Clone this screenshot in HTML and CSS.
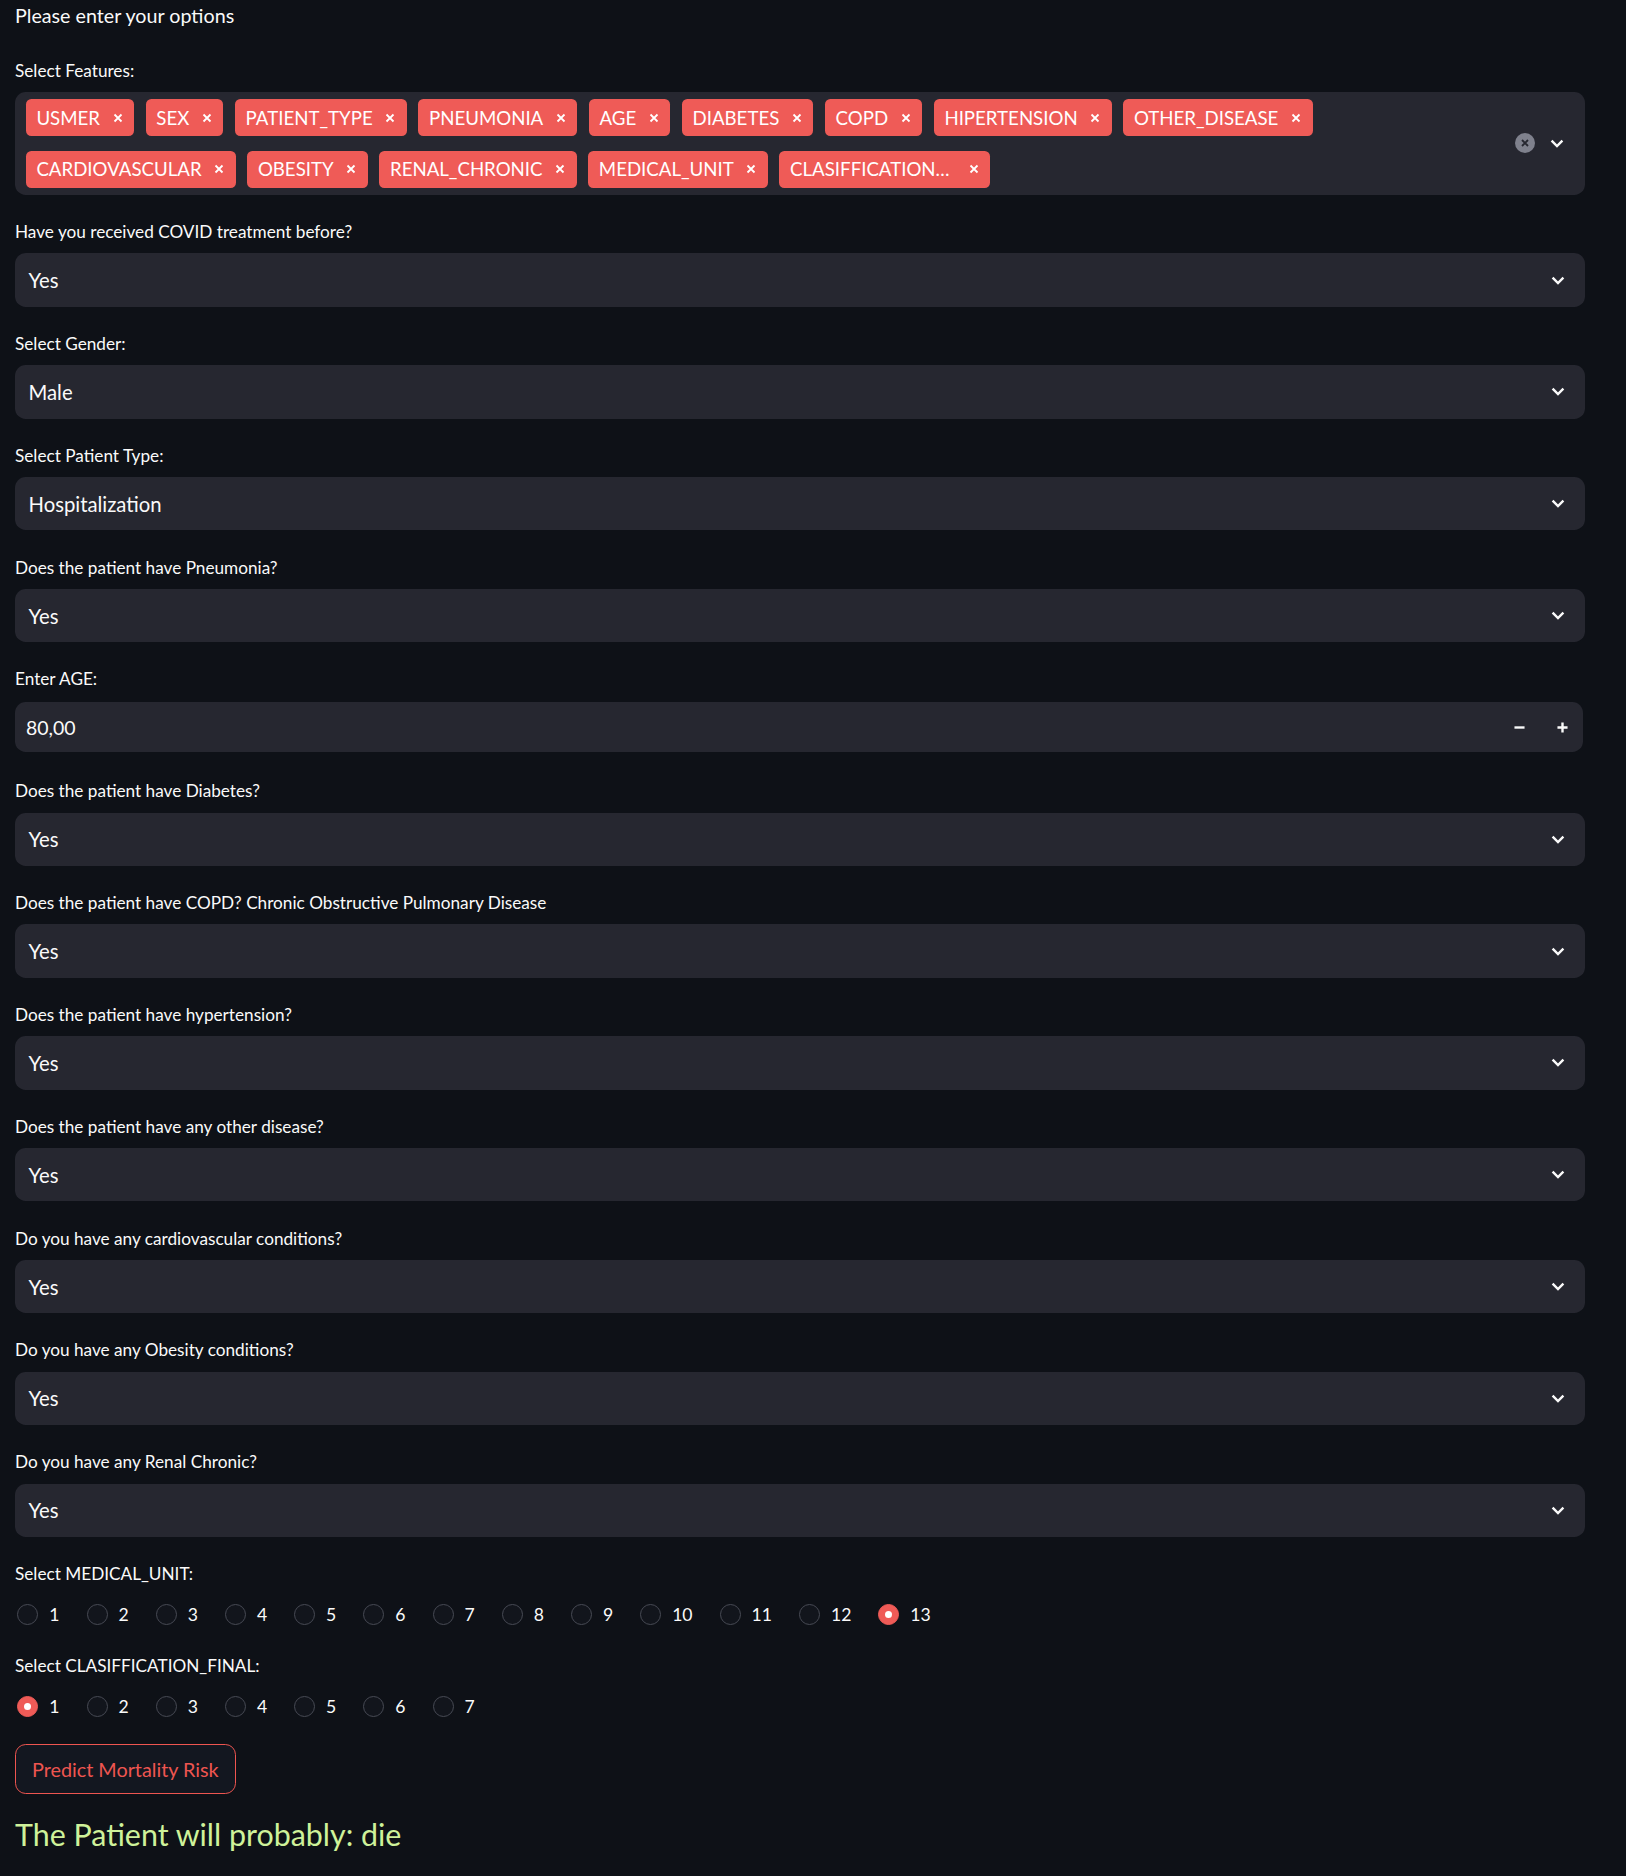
FILE: index.html
```html
<!DOCTYPE html>
<html lang="en">
<head>
<meta charset="utf-8">
<title>Please enter your options</title>
<link rel="stylesheet" href="styles.css">
</head>
<body>
<main class="page">
  <p class="intro">Please enter your options</p>

  <div class="field">
    <div class="wlabel">Select Features:</div>
    <div class="multi">
      <div class="tags">
        <span class="tag"><span class="tag-text">USMER</span><svg class="tag-x" viewBox="0 0 10 10"><path d="M1.5 1.5L8.5 8.5M8.5 1.5L1.5 8.5"/></svg></span>
        <span class="tag"><span class="tag-text">SEX</span><svg class="tag-x" viewBox="0 0 10 10"><path d="M1.5 1.5L8.5 8.5M8.5 1.5L1.5 8.5"/></svg></span>
        <span class="tag"><span class="tag-text">PATIENT_TYPE</span><svg class="tag-x" viewBox="0 0 10 10"><path d="M1.5 1.5L8.5 8.5M8.5 1.5L1.5 8.5"/></svg></span>
        <span class="tag"><span class="tag-text">PNEUMONIA</span><svg class="tag-x" viewBox="0 0 10 10"><path d="M1.5 1.5L8.5 8.5M8.5 1.5L1.5 8.5"/></svg></span>
        <span class="tag"><span class="tag-text">AGE</span><svg class="tag-x" viewBox="0 0 10 10"><path d="M1.5 1.5L8.5 8.5M8.5 1.5L1.5 8.5"/></svg></span>
        <span class="tag"><span class="tag-text">DIABETES</span><svg class="tag-x" viewBox="0 0 10 10"><path d="M1.5 1.5L8.5 8.5M8.5 1.5L1.5 8.5"/></svg></span>
        <span class="tag"><span class="tag-text">COPD</span><svg class="tag-x" viewBox="0 0 10 10"><path d="M1.5 1.5L8.5 8.5M8.5 1.5L1.5 8.5"/></svg></span>
        <span class="tag"><span class="tag-text">HIPERTENSION</span><svg class="tag-x" viewBox="0 0 10 10"><path d="M1.5 1.5L8.5 8.5M8.5 1.5L1.5 8.5"/></svg></span>
        <span class="tag"><span class="tag-text">OTHER_DISEASE</span><svg class="tag-x" viewBox="0 0 10 10"><path d="M1.5 1.5L8.5 8.5M8.5 1.5L1.5 8.5"/></svg></span>
        <span class="tag-break"></span>
        <span class="tag"><span class="tag-text">CARDIOVASCULAR</span><svg class="tag-x" viewBox="0 0 10 10"><path d="M1.5 1.5L8.5 8.5M8.5 1.5L1.5 8.5"/></svg></span>
        <span class="tag"><span class="tag-text">OBESITY</span><svg class="tag-x" viewBox="0 0 10 10"><path d="M1.5 1.5L8.5 8.5M8.5 1.5L1.5 8.5"/></svg></span>
        <span class="tag"><span class="tag-text">RENAL_CHRONIC</span><svg class="tag-x" viewBox="0 0 10 10"><path d="M1.5 1.5L8.5 8.5M8.5 1.5L1.5 8.5"/></svg></span>
        <span class="tag"><span class="tag-text">MEDICAL_UNIT</span><svg class="tag-x" viewBox="0 0 10 10"><path d="M1.5 1.5L8.5 8.5M8.5 1.5L1.5 8.5"/></svg></span>
        <span class="tag"><span class="tag-text trunc">CLASIFFICATION_FINAL</span><svg class="tag-x" viewBox="0 0 10 10"><path d="M1.5 1.5L8.5 8.5M8.5 1.5L1.5 8.5"/></svg></span>
      </div>
      <div class="multi-icons">
        <svg class="clear" viewBox="0 0 20 20"><circle cx="10" cy="10" r="10"/><path d="M7 7L13 13M13 7L7 13"/></svg>
        <svg class="chev" viewBox="0 0 14 9"><path d="M1.6 1.6L7 7L12.4 1.6"/></svg>
      </div>
    </div>
  </div>

  <div class="field">
    <div class="wlabel">Have you received COVID treatment before?</div>
    <div class="select"><span>Yes</span><svg class="chev" viewBox="0 0 14 9"><path d="M1.6 1.6L7 7L12.4 1.6"/></svg></div>
  </div>

  <div class="field">
    <div class="wlabel">Select Gender:</div>
    <div class="select"><span>Male</span><svg class="chev" viewBox="0 0 14 9"><path d="M1.6 1.6L7 7L12.4 1.6"/></svg></div>
  </div>

  <div class="field">
    <div class="wlabel">Select Patient Type:</div>
    <div class="select"><span>Hospitalization</span><svg class="chev" viewBox="0 0 14 9"><path d="M1.6 1.6L7 7L12.4 1.6"/></svg></div>
  </div>

  <div class="field">
    <div class="wlabel">Does the patient have Pneumonia?</div>
    <div class="select"><span>Yes</span><svg class="chev" viewBox="0 0 14 9"><path d="M1.6 1.6L7 7L12.4 1.6"/></svg></div>
  </div>

  <div class="field">
    <div class="wlabel">Enter AGE:</div>
    <div class="number">
      <span class="num-value">80,00</span>
      <span class="step"><svg viewBox="0 0 12 12"><path d="M0.5 6H11.5"/></svg></span>
      <span class="step"><svg viewBox="0 0 12 12"><path d="M0.5 6H11.5M6 0.5V11.5"/></svg></span>
    </div>
  </div>

  <div class="field">
    <div class="wlabel">Does the patient have Diabetes?</div>
    <div class="select"><span>Yes</span><svg class="chev" viewBox="0 0 14 9"><path d="M1.6 1.6L7 7L12.4 1.6"/></svg></div>
  </div>

  <div class="field">
    <div class="wlabel">Does the patient have COPD? Chronic Obstructive Pulmonary Disease</div>
    <div class="select"><span>Yes</span><svg class="chev" viewBox="0 0 14 9"><path d="M1.6 1.6L7 7L12.4 1.6"/></svg></div>
  </div>

  <div class="field">
    <div class="wlabel">Does the patient have hypertension?</div>
    <div class="select"><span>Yes</span><svg class="chev" viewBox="0 0 14 9"><path d="M1.6 1.6L7 7L12.4 1.6"/></svg></div>
  </div>

  <div class="field">
    <div class="wlabel">Does the patient have any other disease?</div>
    <div class="select"><span>Yes</span><svg class="chev" viewBox="0 0 14 9"><path d="M1.6 1.6L7 7L12.4 1.6"/></svg></div>
  </div>

  <div class="field">
    <div class="wlabel">Do you have any cardiovascular conditions?</div>
    <div class="select"><span>Yes</span><svg class="chev" viewBox="0 0 14 9"><path d="M1.6 1.6L7 7L12.4 1.6"/></svg></div>
  </div>

  <div class="field">
    <div class="wlabel">Do you have any Obesity conditions?</div>
    <div class="select"><span>Yes</span><svg class="chev" viewBox="0 0 14 9"><path d="M1.6 1.6L7 7L12.4 1.6"/></svg></div>
  </div>

  <div class="field">
    <div class="wlabel">Do you have any Renal Chronic?</div>
    <div class="select"><span>Yes</span><svg class="chev" viewBox="0 0 14 9"><path d="M1.6 1.6L7 7L12.4 1.6"/></svg></div>
  </div>

  <div class="field">
    <div class="wlabel">Select MEDICAL_UNIT:</div>
    <div class="radios">
      <span class="radio"><span class="dot"></span><span class="rtext">1</span></span>
      <span class="radio"><span class="dot"></span><span class="rtext">2</span></span>
      <span class="radio"><span class="dot"></span><span class="rtext">3</span></span>
      <span class="radio"><span class="dot"></span><span class="rtext">4</span></span>
      <span class="radio"><span class="dot"></span><span class="rtext">5</span></span>
      <span class="radio"><span class="dot"></span><span class="rtext">6</span></span>
      <span class="radio"><span class="dot"></span><span class="rtext">7</span></span>
      <span class="radio"><span class="dot"></span><span class="rtext">8</span></span>
      <span class="radio"><span class="dot"></span><span class="rtext">9</span></span>
      <span class="radio"><span class="dot"></span><span class="rtext">10</span></span>
      <span class="radio"><span class="dot"></span><span class="rtext">11</span></span>
      <span class="radio"><span class="dot"></span><span class="rtext">12</span></span>
      <span class="radio on"><span class="dot"></span><span class="rtext">13</span></span>
    </div>
  </div>

  <div class="field">
    <div class="wlabel">Select CLASIFFICATION_FINAL:</div>
    <div class="radios">
      <span class="radio on"><span class="dot"></span><span class="rtext">1</span></span>
      <span class="radio"><span class="dot"></span><span class="rtext">2</span></span>
      <span class="radio"><span class="dot"></span><span class="rtext">3</span></span>
      <span class="radio"><span class="dot"></span><span class="rtext">4</span></span>
      <span class="radio"><span class="dot"></span><span class="rtext">5</span></span>
      <span class="radio"><span class="dot"></span><span class="rtext">6</span></span>
      <span class="radio"><span class="dot"></span><span class="rtext">7</span></span>
    </div>
  </div>

  <button class="btn" type="button">Predict Mortality Risk</button>

  <p class="result">The Patient will probably: die</p>
</main>
</body>
</html>
```

FILE: styles.css
```css
* { box-sizing: border-box; }

html, body {
  margin: 0;
  background: #0e1117;
}

body {
  font-family: Lato, "Noto Sans", sans-serif;
  color: #fafafa;
}

.page {
  width: 1570px;
  margin-left: 15px;
  display: flex;
  flex-direction: column;
  gap: 21.2px;
}

.intro {
  margin: 0;
  height: 33.4px;
  font-size: 19.7px;
  line-height: 32px;
}

.field {
  display: flex;
  flex-direction: column;
}

.wlabel {
  height: 37.33px;
  padding-bottom: 5.33px;
  font-size: 17.2px;
  line-height: 32px;
  white-space: nowrap;
}

/* multiselect */
.multi {
  height: 103px;
  background: #262730;
  border-radius: 10.67px;
  display: flex;
  align-items: center;
  padding: 0 20.7px 0 10.7px;
}

.tags {
  flex: 1;
  display: flex;
  flex-wrap: wrap;
  column-gap: 11.5px;
  align-content: center;
}

.tag-break {
  flex-basis: 100%;
  height: 0;
}

.tag {
  height: 37px;
  margin: 7.25px 0;
  display: inline-flex;
  align-items: center;
  padding: 0 11.5px 0 10.7px;
  background: #ef5b57;
  border-radius: 5.33px;
  color: #ffffff;
  font-size: 18.67px;
  white-space: nowrap;
}

.tag-text.trunc {
  max-width: 166px;
  overflow: hidden;
  text-overflow: ellipsis;
}

.tag-x {
  width: 10px;
  height: 10px;
  margin-left: 12.6px;
  fill: none;
  stroke: #ffffff;
  stroke-width: 1.8;
}

.multi-icons {
  display: flex;
  align-items: center;
  gap: 15.7px;
}

.clear {
  width: 20px;
  height: 20px;
}
.clear circle { fill: #7f818d; }
.clear path { stroke: #262730; stroke-width: 1.9; fill: none; }

.chev {
  width: 14px;
  height: 9px;
  fill: none;
  stroke: #fafafa;
  stroke-width: 2.4;
}

/* select */
.select {
  height: 53.33px;
  background: #262730;
  border-radius: 10.67px;
  display: flex;
  align-items: center;
  justify-content: space-between;
  padding: 0 20px 0 13.5px;
  font-size: 20.3px;
}

/* number input */
.number {
  height: 50.3px;
  margin: 1.3px 1.7px 1.7px 0;
  background: #262730;
  border-radius: 10.67px;
  display: flex;
  align-items: center;
  padding-left: 11px;
  font-size: 19.5px;
}

.num-value { flex: 1; }

.step {
  width: 42.5px;
  height: 100%;
  display: flex;
  align-items: center;
  justify-content: center;
}
.step svg {
  width: 11px;
  height: 11px;
  fill: none;
  stroke: #fafafa;
  stroke-width: 2.6;
}

/* radios */
.radios {
  height: 33.5px;
  padding-top: 8.9px;
  display: flex;
  align-items: flex-start;
}

.radio {
  display: flex;
  align-items: center;
  height: 21px;
  margin-right: 24.7px;
  font-size: 17.6px;
}

.dot {
  position: relative;
  width: 21px;
  height: 21px;
  margin: 0 11px 0 2.3px;
  border-radius: 50%;
  border: 1.4px solid #474a54;
  background: #12151c;
}

.radio.on .dot {
  background: #ef5b57;
  border-color: #ef5b57;
}
.radio.on .dot::after {
  content: "";
  position: absolute;
  left: 50%;
  top: 50%;
  width: 7px;
  height: 7px;
  margin: -3.5px 0 0 -3.5px;
  border-radius: 50%;
  background: #ffffff;
}

/* button */
.btn {
  align-self: flex-start;
  height: 50.3px;
  margin-top: 1.6px;
  padding: 0 16px;
  border: 1px solid #ee5550;
  border-radius: 10.67px;
  background: #131720;
  color: #ee5550;
  font-family: inherit;
  font-size: 19.8px;
}

.result {
  margin: 0;
  font-size: 30.4px;
  line-height: 38.4px;
  color: #cff29a;
}
```
